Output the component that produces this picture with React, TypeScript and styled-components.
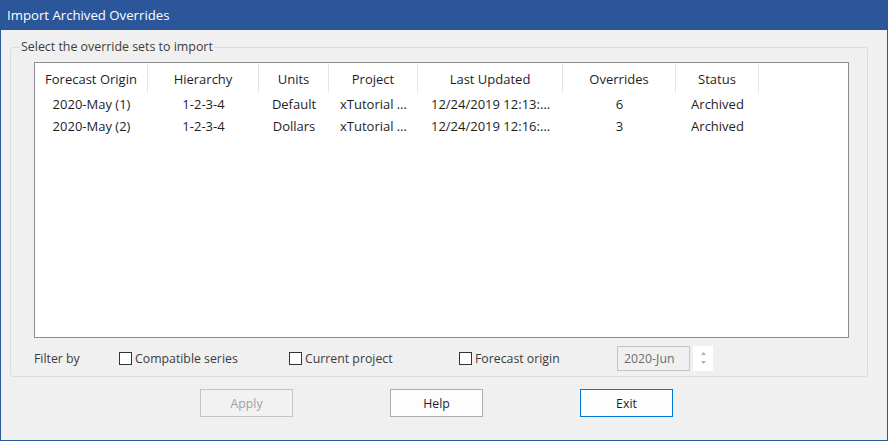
import styled, { createGlobalStyle } from "styled-components";

const GlobalStyle = createGlobalStyle`
  html, body {
    margin: 0;
    padding: 0;
    background: #f0f0f0;
  }
  * {
    box-sizing: border-box;
  }
`;

const blue = "#2b579a";
const font = `"Open Sans", "Noto Sans", "Liberation Sans", sans-serif`;

const Window = styled.div`
  width: 888px;
  height: 441px;
  display: flex;
  flex-direction: column;
  border: 1px solid ${blue};
  border-top: 0;
  background: #f0f0f0;
  font-family: ${font};
  font-size: 12px;
  color: #1e1e1e;
`;
const TitleBar = styled.div`
  height: 30px;
  flex: none;
  display: flex;
  align-items: center;
  margin: 0 -1px;
  padding-left: 7px;
  background: ${blue};
  color: #ffffff;
  font-size: 13.2px;
`;
const GroupBox = styled.fieldset`
  margin: 9px 19px 0 9px;
  padding: 0 18px 5px 9px;
  border: 1px solid #dcdcdc;
  border-radius: 3px;
  min-width: 0;
`;
const Legend = styled.legend`
  padding: 0 1px;
  line-height: 16px;
  font-size: 12.4px;
  color: #3c3c3c;
`;
const ListBox = styled.div`
  margin: 7px 0 0 14px;
  height: 276px;
  border: 1px solid #8c8c8c;
  background: #ffffff;
  font-size: 13px;
`;
const columns = "113px 111px 70px 89px 145px 113px 83px";
const HeaderRow = styled.div`
  display: grid;
  grid-template-columns: ${columns};
  height: 30px;
`;
const HeaderCell = styled.div`
  display: flex;
  align-items: center;
  justify-content: center;
  border-right: 1px solid #e5e5e5;
  margin: 1px 0 0;
  color: #1e1e1e;
`;
const Row = styled.div`
  display: grid;
  grid-template-columns: ${columns};
  height: 22px;
`;
const Cell = styled.div`
  display: flex;
  align-items: center;
  justify-content: center;
  white-space: nowrap;
  overflow: hidden;
`;
const FilterRow = styled.div`
  display: flex;
  align-items: center;
  height: 26px;
  margin: 7px 0 0 14px;
  color: #3c3c3c;
  font-size: 12.3px;
`;
const FilterLabel = styled.div<{ $w: number }>`
  width: ${(p) => p.$w}px;
  display: flex;
  align-items: center;
  gap: 3px;
`;
const Check = styled.span`
  width: 13px;
  height: 13px;
  border: 1px solid #333333;
  background: #ffffff;
  flex: none;
`;
const TextBox = styled.div`
  width: 73px;
  height: 25px;
  border: 1px solid #c4c4c4;
  background: #f0f0f0;
  color: #6d6d6d;
  display: flex;
  align-items: center;
  padding-left: 6px;
`;
const Spinner = styled.div`
  width: 20px;
  height: 25px;
  margin-left: 3px;
  background: #ffffff;
  display: flex;
  flex-direction: column;
  align-items: center;
  justify-content: center;
  gap: 6px;
`;
const ButtonRow = styled.div`
  display: flex;
  gap: 97px;
  padding-left: 199px;
  margin-top: 12px;
  font-size: 12.3px;
`;
const Button = styled.div<{ $disabled?: boolean; $default?: boolean }>`
  width: 93px;
  height: 28px;
  display: flex;
  align-items: center;
  justify-content: center;
  background: ${(p) => (p.$disabled ? "#f2f2f2" : "#fdfdfd")};
  border: 1px solid
    ${(p) => (p.$default ? "#0078d7" : p.$disabled ? "#c4c4c4" : "#adadad")};
  color: ${(p) => (p.$disabled ? "#a0a0a0" : "#1e1e1e")};
`;

const headers = [
  "Forecast Origin",
  "Hierarchy",
  "Units",
  "Project",
  "Last Updated",
  "Overrides",
  "Status",
];
const rows = [
  ["2020-May (1)", "1-2-3-4", "Default", "xTutorial …", "12/24/2019 12:13:…", "6", "Archived"],
  ["2020-May (2)", "1-2-3-4", "Dollars", "xTutorial …", "12/24/2019 12:16:…", "3", "Archived"],
];

export default function App() {
  return (
    <>
      <GlobalStyle />
      <Window>
        <TitleBar>Import Archived Overrides</TitleBar>
        <GroupBox>
          <Legend>Select the override sets to import</Legend>
          <ListBox>
            <HeaderRow>
              {headers.map((h) => (
                <HeaderCell key={h}>{h}</HeaderCell>
              ))}
            </HeaderRow>
            {rows.map((r, i) => (
              <Row key={i}>
                {r.map((c, j) => (
                  <Cell key={j}>{c}</Cell>
                ))}
              </Row>
            ))}
          </ListBox>
          <FilterRow>
            <FilterLabel $w={85}>Filter by</FilterLabel>
            <FilterLabel $w={170}>
              <Check />
              Compatible series
            </FilterLabel>
            <FilterLabel $w={170}>
              <Check />
              Current project
            </FilterLabel>
            <FilterLabel $w={158}>
              <Check />
              Forecast origin
            </FilterLabel>
            <TextBox>2020-Jun</TextBox>
            <Spinner>
              <svg width="5" height="3" viewBox="0 0 5 3">
                <path d="M0 3 L2.5 0 L5 3 Z" fill="#b0b0b0" />
              </svg>
              <svg width="5" height="3" viewBox="0 0 5 3">
                <path d="M0 0 L2.5 3 L5 0 Z" fill="#b0b0b0" />
              </svg>
            </Spinner>
          </FilterRow>
        </GroupBox>
        <ButtonRow>
          <Button $disabled>Apply</Button>
          <Button>Help</Button>
          <Button $default>Exit</Button>
        </ButtonRow>
      </Window>
    </>
  );
}
